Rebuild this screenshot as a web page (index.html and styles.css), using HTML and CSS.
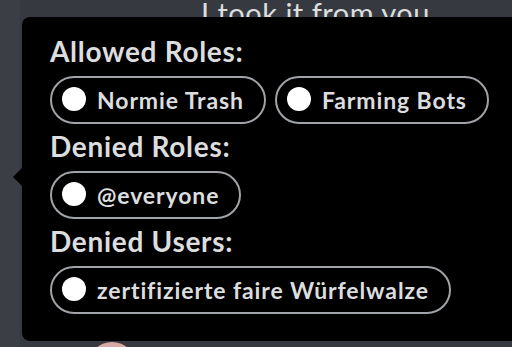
FILE: index.html
```html
<!DOCTYPE html>
<html>
<head>
<meta charset="utf-8">
<link rel="stylesheet" href="styles.css">
</head>
<body>
<div class="chat">
  <div class="gutter"></div>
  <div class="messages">
    <div class="msg-line">I took it from you</div>
    <div class="msg">
      <div class="avatar"></div>
      <div class="author">mmm</div>
    </div>
  </div>
</div>

<div class="tooltip">
  <div class="section">
    <div class="heading">Allowed Roles:</div>
    <div class="pills">
      <span class="pill"><span class="dot"></span>Normie Trash</span>
      <span class="pill"><span class="dot"></span>Farming Bots</span>
    </div>
  </div>
  <div class="section">
    <div class="heading">Denied Roles:</div>
    <div class="pills">
      <span class="pill"><span class="dot"></span>@everyone</span>
    </div>
  </div>
  <div class="section">
    <div class="heading">Denied Users:</div>
    <div class="pills">
      <span class="pill"><span class="dot"></span>zertifizierte faire Würfelwalze</span>
    </div>
  </div>
</div>
</body>
</html>
```

FILE: styles.css
```css
html, body {
  margin: 0;
  padding: 0;
}
body {
  width: 512px;
  height: 347px;
  overflow: hidden;
  background: #36393f;
  font-family: Lato, "Open Sans", sans-serif;
  position: relative;
}
.chat {
  display: flex;
  height: 347px;
  overflow: hidden;
}
.gutter {
  width: 20px;
  background: #3b3e44;
  flex: none;
}
.messages {
  flex: 1;
  display: flex;
  flex-direction: column;
  overflow: hidden;
}
.msg-line {
  margin-top: -3px;
  padding-left: 181px;
  font-size: 29px;
  line-height: 32px;
  letter-spacing: 0.5px;
  color: #dcddde;
  white-space: nowrap;
}
.msg {
  margin-top: auto;
  height: 5px;
  display: flex;
  gap: 70px;
  padding-left: 68px;
  overflow: hidden;
}
.avatar {
  width: 48px;
  height: 48px;
  border-radius: 50%;
  background: #d9a9a6;
  flex: none;
}
.author {
  color: #8ea1e1;
  font-size: 20px;
  line-height: 20px;
  font-weight: 700;
}
.tooltip {
  position: absolute;
  left: 22px;
  top: 17px;
  right: -20px;
  bottom: 6px;
  background: #000;
  border-radius: 8px;
  padding: 19px 0 0 28px;
  box-sizing: border-box;
}
.tooltip::before {
  content: "";
  position: absolute;
  left: -9px;
  top: 151px;
  border-top: 9px solid transparent;
  border-bottom: 9px solid transparent;
  border-right: 9px solid #000;
}
.section {
  margin-bottom: 7px;
}
.heading {
  font-size: 28px;
  line-height: 30px;
  font-weight: 700;
  letter-spacing: 0.7px;
  color: #dcddde;
  margin-bottom: 10px;
}
.pills {
  display: flex;
  gap: 9px;
}
.pill {
  display: inline-flex;
  align-items: center;
  height: 48px;
  box-sizing: border-box;
  border: 2px solid #a0a3a7;
  border-radius: 24px;
  padding: 0 20px 0 10px;
  font-size: 23px;
  font-weight: 700;
  letter-spacing: 0.9px;
  color: #dcddde;
  white-space: nowrap;
}
.dot {
  width: 24px;
  height: 24px;
  border-radius: 50%;
  background: #fff;
  margin-right: 11px;
  margin-top: -3px;
  flex: none;
}
```
